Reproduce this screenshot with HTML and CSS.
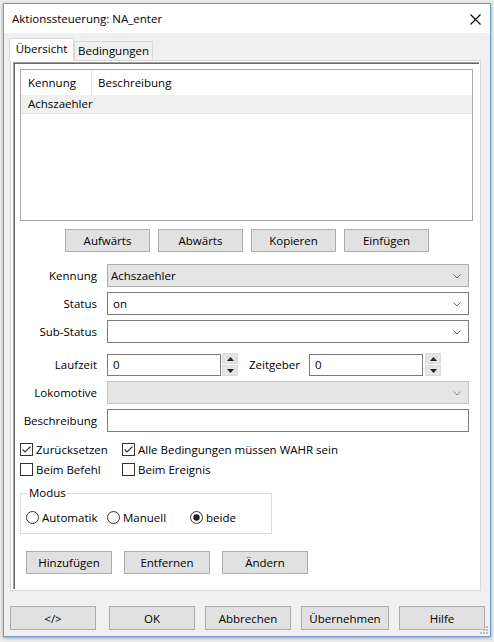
FILE: index.html
```html
<!DOCTYPE html>
<html lang="de">
<head>
<meta charset="utf-8">
<title>Aktionssteuerung: NA_enter</title>
<link rel="stylesheet" href="styles.css">
</head>
<body>
<div class="screen">
  <div class="dialog">
    <div class="titlebar">
      <span class="title">Aktionssteuerung: NA_enter</span>
      <svg class="close" width="11" height="11" viewBox="0 0 11 11"><path d="M0.5 0.5 L10.5 10.5 M10.5 0.5 L0.5 10.5" stroke="#000" stroke-width="1.1" fill="none"/></svg>
    </div>
    <div class="body">
      <div class="tabs">
        <div class="tab active">Übersicht</div>
        <div class="tab">Bedingungen</div>
      </div>
      <div class="tabpanel">
        <div class="page">
          <div class="list">
            <div class="list-head">
              <div class="col c1">Kennung</div>
              <div class="col c2">Beschreibung</div>
            </div>
            <div class="list-row">Achszaehler</div>
          </div>

          <div class="btnrow">
            <button class="btn">Aufwärts</button>
            <button class="btn">Abwärts</button>
            <button class="btn">Kopieren</button>
            <button class="btn">Einfügen</button>
          </div>

          <div class="form">
            <div class="row">
              <label class="lbl">Kennung</label>
              <div class="combo readonly"><span>Achszaehler</span><svg class="chev" width="8" height="5" viewBox="0 0 8 5"><polyline points="0.5,0.5 4,4 7.5,0.5" fill="none" stroke="#606060" stroke-width="1"/></svg></div>
            </div>
            <div class="row">
              <label class="lbl">Status</label>
              <div class="combo"><span>on</span><svg class="chev" width="8" height="5" viewBox="0 0 8 5"><polyline points="0.5,0.5 4,4 7.5,0.5" fill="none" stroke="#606060" stroke-width="1"/></svg></div>
            </div>
            <div class="row">
              <label class="lbl">Sub-Status</label>
              <div class="combo"><span></span><svg class="chev" width="8" height="5" viewBox="0 0 8 5"><polyline points="0.5,0.5 4,4 7.5,0.5" fill="none" stroke="#606060" stroke-width="1"/></svg></div>
            </div>
            <div class="row row-time">
              <label class="lbl">Laufzeit</label>
              <div class="num">0</div>
              <div class="spin spin1">
                <div class="sb"><svg width="7" height="4" viewBox="0 0 7 4"><polygon points="3.5,0 7,4 0,4" fill="#222"/></svg></div>
                <div class="sb"><svg width="7" height="4" viewBox="0 0 7 4"><polygon points="0,0 7,0 3.5,4" fill="#222"/></svg></div>
              </div>
              <label class="lbl2">Zeitgeber</label>
              <div class="num">0</div>
              <div class="spin spin2">
                <div class="sb"><svg width="7" height="4" viewBox="0 0 7 4"><polygon points="3.5,0 7,4 0,4" fill="#222"/></svg></div>
                <div class="sb"><svg width="7" height="4" viewBox="0 0 7 4"><polygon points="0,0 7,0 3.5,4" fill="#222"/></svg></div>
              </div>
            </div>
            <div class="row">
              <label class="lbl">Lokomotive</label>
              <div class="combo disabled"><span></span><svg class="chev" width="8" height="5" viewBox="0 0 8 5"><polyline points="0.5,0.5 4,4 7.5,0.5" fill="none" stroke="#8a8a8a" stroke-width="1"/></svg></div>
            </div>
            <div class="row">
              <label class="lbl">Beschreibung</label>
              <div class="combo text"><span></span></div>
            </div>
          </div>

          <div class="checks">
            <div class="chk"><span class="box"><svg width="11" height="11" viewBox="0 0 11 11"><polyline points="1.5,5.5 4,8 9.5,2.5" fill="none" stroke="#333" stroke-width="1.1"/></svg></span>Zurücksetzen</div>
            <div class="chk"><span class="box"><svg width="11" height="11" viewBox="0 0 11 11"><polyline points="1.5,5.5 4,8 9.5,2.5" fill="none" stroke="#333" stroke-width="1.1"/></svg></span>Alle Bedingungen müssen WAHR sein</div>
            <div class="chk"><span class="box"></span>Beim Befehl</div>
            <div class="chk"><span class="box"></span>Beim Ereignis</div>
          </div>

          <fieldset class="group">
            <legend>Modus</legend>
            <div class="radios">
              <div class="rad r1"><svg width="13" height="13" viewBox="0 0 13 13"><circle cx="6.5" cy="6.5" r="6" fill="#fff" stroke="#333" stroke-width="1"/></svg>Automatik</div>
              <div class="rad r2"><svg width="13" height="13" viewBox="0 0 13 13"><circle cx="6.5" cy="6.5" r="6" fill="#fff" stroke="#333" stroke-width="1"/></svg>Manuell</div>
              <div class="rad r3"><svg width="13" height="13" viewBox="0 0 13 13"><circle cx="6.5" cy="6.5" r="6" fill="#fff" stroke="#333" stroke-width="1"/><circle cx="6.5" cy="6.5" r="3.2" fill="#222"/></svg>beide</div>
            </div>
          </fieldset>

          <div class="btnrow2">
            <button class="btn">Hinzufügen</button>
            <button class="btn">Entfernen</button>
            <button class="btn">Ändern</button>
          </div>
        </div>
      </div>

      <div class="footer">
        <button class="btn fb">&lt;/&gt;</button>
        <button class="btn fb ok">OK</button>
        <button class="btn fb">Abbrechen</button>
        <button class="btn fb wide">Übernehmen</button>
        <button class="btn fb">Hilfe</button>
      </div>
    </div>
    <svg class="grip" width="9" height="9" viewBox="0 0 9 9">
      <rect x="7" y="1" width="2" height="2" fill="#bdbdbd"/>
      <rect x="4" y="4" width="2" height="2" fill="#bdbdbd"/>
      <rect x="7" y="4" width="2" height="2" fill="#bdbdbd"/>
      <rect x="1" y="7" width="2" height="2" fill="#bdbdbd"/>
      <rect x="4" y="7" width="2" height="2" fill="#bdbdbd"/>
      <rect x="7" y="7" width="2" height="2" fill="#bdbdbd"/>
    </svg>
  </div>
</div>
</body>
</html>
```

FILE: styles.css
```css
* { box-sizing: border-box; }

html, body {
  margin: 0;
  padding: 0;
}

body {
  width: 494px;
  height: 642px;
  overflow: hidden;
  font-family: "Open Sans", "Noto Sans", sans-serif;
  font-size: 11.5px;
  color: #000;
  background: #f2f2f2;
}

.screen {
  width: 494px;
  height: 642px;
  padding: 3px 0 0 3px;
  background: #ececec;
}

.dialog {
  position: relative;
  width: 488px;
  height: 634px;
  border: 1px solid #6b9cd6;
  background: #f0f0f0;
  display: flex;
  flex-direction: column;
  box-shadow: 0 1px 3px rgba(0, 0, 0, 0.35);
}

.titlebar {
  height: 29px;
  flex: none;
  background: #fff;
  display: flex;
  align-items: center;
  justify-content: space-between;
  padding: 0 9px 0 8px;
}

.title {
  font-size: 11.5px;
  line-height: 16px;
}

.close { display: block; margin-top: 1px; }

.body {
  flex: 1;
  display: flex;
  flex-direction: column;
  padding: 5px 0 0 6px;
}

.tabs {
  display: flex;
  align-items: flex-end;
  height: 22px;
  position: relative;
  z-index: 1;
}

.tab {
  height: 19px;
  width: 79px;
  border: 1px solid #d9d9d9;
  border-bottom: none;
  background: #f0f0f0;
  text-align: center;
  line-height: 17px;
}

.tab.active {
  width: 65px;
  height: 23px;
  margin-left: -1px;
  margin-bottom: -1px;
  background: #fff;
  line-height: 20px;
}

.tabpanel {
  width: 471px;
  height: 531px;
  border: 1px solid #d9d9d9;
  background: #fff;
  padding: 1px 1px 1px 2px;
  display: flex;
}

.page {
  flex: 1;
  background: #fff;
  border-top: 1px solid #a0a0a0;
  border-left: 1px solid #a0a0a0;
  box-shadow: inset 1px 1px 0 #696969;
  display: flex;
  flex-direction: column;
  padding-left: 1px;
  padding-top: 1px;
}

/* list view */
.list {
  margin: 5px 0 0 5px;
  width: 453px;
  height: 152px;
  border: 1px solid #a9a9a9;
  background: #fff;
}

.list-head {
  height: 25px;
  display: flex;
  align-items: center;
}

.col {
  height: 25px;
  line-height: 25px;
}

.c1 {
  width: 71px;
  padding-left: 7px;
  border-right: 1px solid #e5e5e5;
}

.c2 { padding-left: 6px; }

.list-row {
  height: 19px;
  line-height: 18px;
  padding-left: 7px;
  background: #f0f0f0;
  border-bottom: 1px solid #e3e3e3;
}

/* buttons */
.btn {
  font-family: inherit;
  font-size: 11.5px;
  color: #000;
  background: #e1e1e1;
  border: 1px solid #adadad;
  border-radius: 0;
  padding: 0;
  margin: 0;
  height: 23px;
  width: 86px;
  line-height: 20px;
}

.btnrow {
  margin: 8px 0 0 50px;
  display: flex;
  gap: 8px;
}

.btnrow .btn { width: 85px; }

/* form */
.form {
  margin-top: 12px;
  display: flex;
  flex-direction: column;
  gap: 5px;
}

.row {
  display: flex;
  align-items: center;
  height: 23px;
}

.row-time {
  margin-top: 5px;
  height: 23px;
}

.lbl {
  width: 82px;
  margin-right: 10px;
  text-align: right;
  line-height: 16px;
}

.combo {
  width: 362px;
  height: 23px;
  border: 1px solid #7a7a7a;
  background: #fff;
  display: flex;
  align-items: center;
  justify-content: space-between;
  padding: 0 7px 0 5px;
}

.combo span { line-height: 16px; }

.combo.readonly {
  background: #e5e5e5;
  border-color: #adadad;
  padding-left: 3px;
}

.combo.disabled {
  background: #e5e5e5;
  border-color: #c4c4c4;
}

.chev { display: block; margin-top: 1px; }

.num {
  width: 114px;
  height: 22px;
  border: 1px solid #7a7a7a;
  background: #fff;
  padding-left: 5px;
  line-height: 19px;
}

.spin {
  width: 16px;
  height: 23px;
  display: flex;
  flex-direction: column;
  gap: 1px;
}

.spin1 { margin-left: 1px; }
.spin2 { margin-left: 2px; }

.sb {
  flex: 1;
  background: #e5e5e5;
  border: 1px solid #dcdcdc;
  display: flex;
  align-items: center;
  justify-content: center;
}

.sb svg { display: block; }

.lbl2 {
  width: 50px;
  margin-left: 11px;
  margin-right: 10px;
  line-height: 16px;
  white-space: nowrap;
}

/* checkboxes */
.checks {
  margin: 11px 0 0 5px;
  display: grid;
  grid-template-columns: 102px auto;
  row-gap: 7px;
}

.chk {
  display: flex;
  align-items: center;
  height: 13px;
  line-height: 13px;
  white-space: nowrap;
}

.box {
  width: 13px;
  height: 13px;
  border: 1px solid #333;
  background: #fff;
  margin-right: 3px;
  flex: none;
  display: flex;
  align-items: center;
  justify-content: center;
}

.box svg { display: block; }

/* group box */
.group {
  margin: 10px 0 0 5px;
  width: 252px;
  border: 1px solid #dcdcdc;
  padding: 9px 5px 7px 5px;
  min-width: 0;
}

.group legend {
  margin-left: 1px;
  padding: 0 2px;
  line-height: 14px;
}

.radios {
  display: flex;
  align-items: center;
  height: 17px;
}

.rad {
  display: flex;
  align-items: center;
  line-height: 16px;
  white-space: nowrap;
}

.rad svg { display: block; margin-right: 3px; flex: none; }

.r1 { width: 81px; }
.r2 { width: 83px; }

/* bottom page buttons */
.btnrow2 {
  margin: 17px 0 0 11px;
  display: flex;
  gap: 12px;
}

/* footer */
.footer {
  margin-top: 15px;
  display: flex;
  gap: 10px;
}

.fb { height: 24px; width: 86px; line-height: 21px; }
.fb.ok { margin-left: 3px; }
.fb.wide { width: 88px; }

.grip {
  position: absolute;
  right: 2px;
  bottom: 2px;
}
```
